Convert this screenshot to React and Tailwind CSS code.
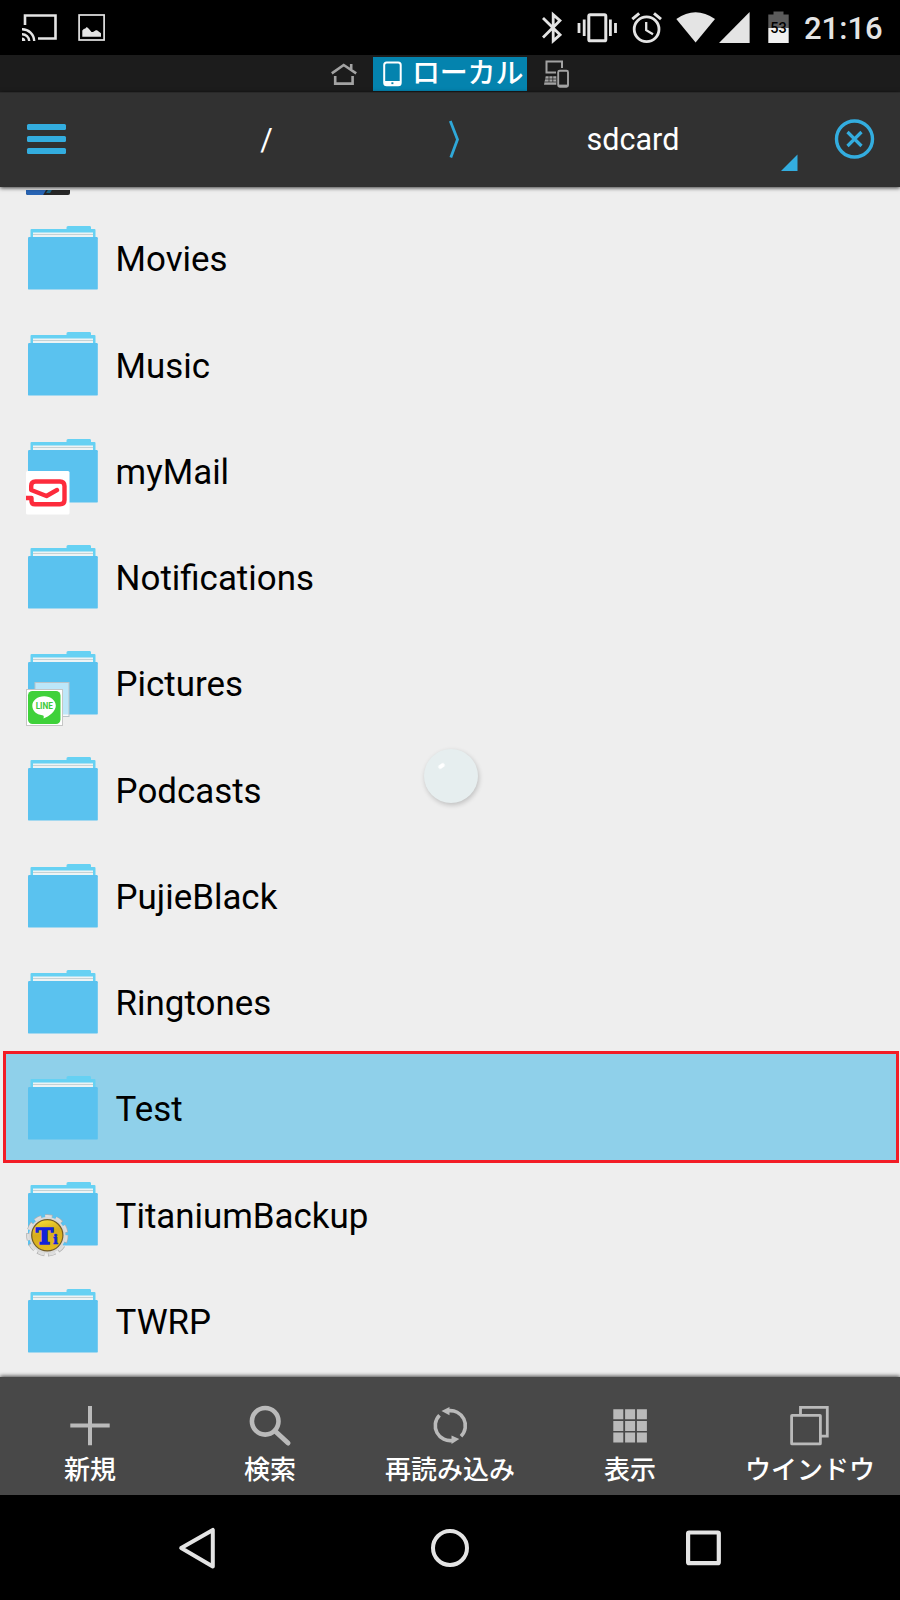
import clsx from "clsx";

const folders = [
  { name: "Movies" },
  { name: "Music" },
  { name: "myMail", badge: "mail" },
  { name: "Notifications" },
  { name: "Pictures", badge: "line" },
  { name: "Podcasts" },
  { name: "PujieBlack" },
  { name: "Ringtones" },
  { name: "Test", selected: true },
  { name: "TitaniumBackup", badge: "titanium" },
  { name: "TWRP" },
];

function StatusBar() {
  return (
    <div className="flex h-[55px] shrink-0 items-center bg-black pl-[22px] pr-[17px] text-[#e4e4e4]">
      {/* Cast */}
      <svg className="h-[55px] w-[36px]" viewBox="22 0 36 55" fill="none" stroke="currentColor">
        <path d="M25 25V15.5H55.5V38.5H38" strokeWidth="2.6" />
        <path d="M22 29.2A12 12 0 0 1 34.2 41M22 34.2A7 7 0 0 1 29.2 41" strokeWidth="2.4" />
        <path d="M22 37.6A3.6 3.6 0 0 1 25.4 41H22Z" fill="currentColor" stroke="none" />
      </svg>
      {/* Picture */}
      <svg className="ml-[20px] h-[55px] w-[28px]" viewBox="78 0 28 55">
        <rect x="79.1" y="15" width="25" height="25" fill="none" stroke="currentColor" strokeWidth="1.7" />
        <path d="M82.3 36.7V30.5L84 28.8H85L86.8 27L88.8 28.8L91.5 32H93L95.8 30.2H97L101 33.2V36.7Z" fill="currentColor" />
      </svg>
      <div className="flex-1" />
      {/* Bluetooth */}
      <svg className="h-[55px] w-[20px]" viewBox="542 0 20 55" fill="none" stroke="currentColor" strokeWidth="2.8">
        <path d="M543 18L560 34.8L553.2 40.8V14.6L560 20.6L543 37.4" />
      </svg>
      {/* Vibrate */}
      <svg className="ml-[15px] h-[55px] w-[40px]" viewBox="577 0 40 55">
        <rect x="588.8" y="14.8" width="17" height="26" rx="1.4" fill="none" stroke="currentColor" strokeWidth="3" />
        <path d="M579 23V33M584.2 19.5V36M610.4 19.5V36M615.5 23V33" stroke="currentColor" strokeWidth="2.8" />
      </svg>
      {/* Alarm */}
      <svg className="ml-[14px] h-[55px] w-[32px]" viewBox="631 0 32 55" fill="none" stroke="currentColor">
        <circle cx="646.6" cy="29.2" r="12.4" strokeWidth="2.8" />
        <path d="M632.3 19.2L639.2 13.4M654 13.4L661 19.2" strokeWidth="3" />
        <path d="M646.2 22V30.2L653 34.2" strokeWidth="2.3" />
      </svg>
      {/* Wifi */}
      <svg className="ml-[13px] h-[55px] w-[39px]" viewBox="676 0 39 55">
        <path d="M676.3 19Q695.5 5.4 715 19L695.6 42.5Z" fill="currentColor" />
      </svg>
      {/* Signal */}
      <svg className="ml-[4px] h-[55px] w-[31px]" viewBox="719 0 31 55">
        <path d="M719 43L749.6 12V43Z" fill="currentColor" />
      </svg>
      {/* Battery */}
      <svg className="ml-[18px] h-[55px] w-[21px]" viewBox="768 0 21 55">
        <path d="M768.3 14.5H773.5V11.5H783.5V14.5H788.7V28H768.3Z" fill="#5b5b5b" />
        <path d="M768.3 28H788.7V43H768.3Z" fill="#f0f0f0" />
        <text x="778.5" y="33.2" textAnchor="middle" fill="#000" className="font-['Roboto'] text-[14.5px] font-medium">53</text>
      </svg>
      <div className="ml-[15px] w-[79px] whitespace-nowrap text-[31px] font-medium leading-[55px]">
        <span className="relative top-[1px]">21:16</span>
      </div>
    </div>
  );
}

function TabBar() {
  return (
    <div className="flex h-[37px] shrink-0 items-center bg-[#1c1c1c] pl-[331px] text-[#a3a3a3]">
      <svg className="h-[37px] w-[26px]" viewBox="331 55 26 37" fill="none" stroke="currentColor">
        <path d="M331.8 73.4L343.7 65L356.2 73.4M351.2 64V69" strokeWidth="2.6" />
        <path d="M335.2 76V83.6H352.6V76" strokeWidth="2.6" />
      </svg>
      <div className="ml-[16px] flex h-[34px] w-[154px] items-center bg-[#0483ae] pl-[10px] text-white">
        <svg className="h-[26px] w-[19px]" viewBox="0 0 19 26">
          <rect x="1.2" y="1.5" width="16.5" height="22.8" rx="2.5" fill="none" stroke="currentColor" strokeWidth="2" />
          <path d="M1.5 20H17.5V24H1.5Z" fill="currentColor" />
          <rect x="8.4" y="21.3" width="2" height="1.8" fill="#0483ae" />
        </svg>
        <span className="ml-[10px] whitespace-nowrap text-[28px] font-medium leading-[34px] tracking-[-0.2px]">ローカル</span>
      </div>
      <svg className="ml-[16px] h-[37px] w-[27px]" viewBox="543 55 27 37" fill="none" stroke="currentColor">
        <path d="M556 72.6H546.5V61.5H562V68" strokeWidth="2" />
        <rect x="558.2" y="70.8" width="9.8" height="16" rx="1.5" strokeWidth="1.9" />
        <path d="M558.5 85.8H568" strokeWidth="2.4" />
        <path d="M545.7 76.3H556.3V84.8H544Z" fill="currentColor" stroke="none" />
        <path d="M545 79H556M544.5 82H556M549 76V82M552.8 76V82" stroke="#1c1c1c" strokeWidth="0.7" />
      </svg>
    </div>
  );
}

function PathBar() {
  return (
    <div className="relative z-10 flex h-[95px] shrink-0 items-center border-t border-[#292929] bg-[#313131] pb-[2px] text-[30.5px] text-white shadow-[0_1px_4px_rgba(0,0,0,0.75)]">
      <div className="flex w-[92px] flex-col gap-[6px] pl-[26.5px]">
        <div className="h-[6px] w-[39.5px] rounded-[1.5px] bg-[#33addf]" />
        <div className="h-[6px] w-[39.5px] rounded-[1.5px] bg-[#33addf]" />
        <div className="h-[6px] w-[39.5px] rounded-[1.5px] bg-[#33addf]" />
      </div>
      <div className="w-[349px] pt-[2px] text-center">/</div>
      <svg className="h-[38px] w-[25px]" viewBox="441 120 25 38" fill="none" stroke="#2fa8d8" strokeWidth="2.8">
        <path d="M450.3 121L457.5 139.6L450.8 157.5" />
      </svg>
      <div className="w-[334px] pt-[2px] text-center">sdcard</div>
      <svg className="-ml-[19px] h-[17px] w-[17px] translate-y-[23px]" viewBox="0 0 17 17">
        <path d="M0 17L16.5 0.5V17Z" fill="#33addf" />
      </svg>
      <svg className="ml-[36px] h-[42px] w-[42px]" viewBox="0 0 42 42" fill="none" stroke="#33addf">
        <circle cx="20.5" cy="21" r="18" strokeWidth="3.4" />
        <path d="M13.5 14L27.5 28M27.5 14L13.5 28" strokeWidth="3.2" />
      </svg>
    </div>
  );
}

function MailBadge() {
  return (
    <svg className="absolute left-[-2px] top-[32px] h-[44px] w-[44px]" viewBox="0 0 44 44">
      <rect width="43.5" height="43.5" rx="1.5" fill="#fff" />
      <path
        d="M0 27H5.500V30Q5.500 33.300 9 33.300H34Q38.500 33.300 38.500 29V15Q38.500 10.500 34 10.500H9.500Q5.200 10.500 5.200 15V19L20.500 25L31 19"
        fill="none"
        stroke="#fd2b3c"
        strokeWidth="4.4"
        strokeLinejoin="round"
        strokeLinecap="round"
      />
    </svg>
  );
}

function LineBadge() {
  return (
    <svg className="absolute left-[-2px] top-[30px] h-[45px] w-[45px]" viewBox="0 0 45 45">
      <rect x="9" y="1.5" width="34" height="34" fill="#fff" fillOpacity="0.6" stroke="#b9c4c9" strokeWidth="1" />
      <rect x="0.5" y="8.5" width="36" height="36" fill="#fff" stroke="#c6c6c6" />
      <rect x="2" y="10" width="32.5" height="33" rx="4.5" fill="#3fd13a" />
      <path d="M18.2 15.2C11.5 15.2 6.3 19.3 6.3 24.8C6.3 30 10.5 33.5 16.2 34.3C18 34.6 18 35.3 17.5 37.5C23 35.5 29.8 30.5 29.8 24.8C29.800 19.300 24.700 15.200 18.200 15.200Z" fill="#fff" />
      <text x="18.3" y="27.8" textAnchor="middle" fill="#3cc93a" className="font-['Roboto'] text-[8.2px] font-bold">LINE</text>
    </svg>
  );
}

function TitaniumBadge() {
  return (
    <svg className="absolute left-[-2px] top-[32px] h-[43px] w-[43px]" viewBox="0 0 43 43">
      <defs>
        <linearGradient id="gold" x1="0" y1="0" x2="0.3" y2="1">
          <stop offset="0" stopColor="#ffe93a" />
          <stop offset="0.5" stopColor="#d6ac1c" />
          <stop offset="1" stopColor="#e3b91f" />
        </linearGradient>
      </defs>
      <circle cx="21.3" cy="21.3" r="18.8" fill="none" stroke="#b0b0b0" strokeWidth="4.6" strokeDasharray="7.2 3.538" />
      <circle cx="21.3" cy="21.3" r="18.4" fill="none" stroke="#dedede" strokeWidth="4" strokeDasharray="6.4 4.11" />
      <circle cx="21.3" cy="21.3" r="18.2" fill="#d8d8d8" />
      <circle cx="21.3" cy="21.3" r="15.6" fill="url(#gold)" stroke="#715b27" strokeWidth="1.2" />
      <text x="10" y="30" fill="#1322d8" stroke="#1322d8" strokeWidth="1.6" className="font-['DejaVu_Serif'] text-[23px] font-bold">T</text>
      <text x="27.2" y="30" fill="#1322d8" stroke="#1322d8" strokeWidth="0.7" className="font-['DejaVu_Serif'] text-[12.5px] font-bold">i</text>
    </svg>
  );
}

const badges = { mail: MailBadge, line: LineBadge, titanium: TitaniumBadge };

function FolderRow({ name, badge, selected }) {
  const Badge = badges[badge];
  return (
    <div className={clsx("relative flex h-[106.25px] items-start pl-[28px] pt-[22px]", selected && "z-10")}>
      {selected && (
        <div className="absolute bottom-[-3px] left-[3px] right-[1px] top-[-3px] border-[3px] border-[#f21c26] bg-[#8fd0ea]" />
      )}
      <div className="relative h-[64px] w-[70px]">
        <svg className="h-[64px] w-[70px]" viewBox="0 0 70 64">
          <path d="M2.5 11V4Q2.5 3 3.5 3H38.5V1.5Q38.500 0 40 0H62Q63 0 63 1.500V3H66.500Q67.500 3 67.500 4V11Z" fill="#66d1f3" />
          <path d="M5 6.5H65V11H5Z" fill="#edf3f4" />
          <path d="M5 8.5H65" stroke="#b9c8cc" strokeWidth="0.8" />
          <rect y="11" width="69.8" height="52.6" rx="1.2" fill="#5ac2ef" />
        </svg>
        {Badge && <Badge />}
      </div>
      <span className="relative ml-[17.6px] mt-[10.4px] whitespace-nowrap text-[34.9px] leading-[48px] text-black">{name}</span>
    </div>
  );
}

function FileList() {
  return (
    <div className="relative h-[1190px] shrink-0 overflow-hidden bg-[#eeeeee]">
      {/* Bottom edge of the row scrolled under the path bar */}
      <div className="flex h-[17px] pl-[26px] pt-[3px]">
        <div className="flex h-[5px] w-[43.5px] overflow-hidden rounded-b-[2px] bg-[#272727]">
          <div className="w-[20px] origin-top -skew-x-[30deg] bg-[#2864b4]" />
          <div className="ml-[1px] h-[3px] w-[4px] -skew-x-[30deg] bg-[#1c6688]" />
        </div>
      </div>
      {folders.map((folder) => (
        <FolderRow key={folder.name} {...folder} />
      ))}
      {/* Floating touch button */}
      <div className="absolute left-[423.5px] top-[562px] h-[54px] w-[54px] rounded-full bg-[#e6eeef] shadow-[1px_2px_5px_rgba(0,0,0,0.2)]">
        <div className="absolute left-[14px] top-[15px] h-[4px] w-[7px] -rotate-[35deg] rounded-full bg-white blur-[0.5px]" />
      </div>
    </div>
  );
}

const tools = [
  {
    label: "新規",
    icon: <path d="M30 10V49.2M10.3 29.6H49.7" stroke="currentColor" strokeWidth="4" />,
  },
  {
    label: "検索",
    icon: (
      <g stroke="currentColor" fill="none">
        <circle cx="25.2" cy="25.3" r="13.3" strokeWidth="4.6" />
        <path d="M35 35L48 47" strokeWidth="5" strokeLinecap="round" />
      </g>
    ),
  },
  {
    label: "再読み込み",
    icon: (
      <g>
        <path d="M19.5 19.2A15 15 0 0 0 33 44.4M28 14.8A15 15 0 0 1 41 40.200" fill="none" stroke="currentColor" strokeWidth="3.6" />
        <path d="M21.500 15L29.500 11V19.200Z" fill="currentColor" />
        <path d="M39.300 43L31.500 39.500V48Z" fill="currentColor" />
      </g>
    ),
  },
  {
    label: "表示",
    icon: (
      <path
        d="M13.3 13.3h10v10h-10ZM25.1 13.3h10v10h-10ZM36.9 13.3h10v10h-10ZM13.3 25h10v10h-10ZM25.1 25h10v10h-10ZM36.9 25h10v10h-10ZM13.3 36.5h10v10h-10ZM25.1 36.5h10v10h-10ZM36.9 36.5h10v10h-10Z"
        fill="currentColor"
      />
    ),
  },
  {
    label: "ウインドウ",
    icon: (
      <g fill="none" stroke="currentColor" strokeWidth="2.8">
        <rect x="11.6" y="19.300" width="28.8" height="28.6" rx="0.5" />
        <path d="M20.5 19V11.3H47.3V40.2H40.5" />
      </g>
    ),
  },
];

function Toolbar() {
  return (
    <div className="relative grid h-[118px] shrink-0 grid-cols-5 bg-[#484848] shadow-[0_-1px_4px_rgba(0,0,0,0.7)]">
      {tools.map((tool) => (
        <div key={tool.label} className="flex flex-col items-center pt-[19px]">
          <svg className="h-[60px] w-[60px] text-[#bababa]" viewBox="0 0 60 60">
            {tool.icon}
          </svg>
          <span className="-mt-[5px] whitespace-nowrap text-[26px] font-medium leading-[38px] text-white">{tool.label}</span>
        </div>
      ))}
    </div>
  );
}

function NavBar() {
  return (
    <div className="flex h-[105px] shrink-0 items-center bg-black pl-[177px] text-[#e4e4e4]">
      <svg className="h-[44px] w-[40px]" viewBox="177 1525.5 40 44" fill="none" stroke="currentColor" strokeWidth="4" strokeLinejoin="round">
        <path d="M181.2 1547.600L212.8 1529.400V1566Z" />
      </svg>
      <svg className="ml-[213px] h-[40px] w-[40px]" viewBox="430 1527.5 40 40" fill="none" stroke="currentColor" strokeWidth="4">
        <circle cx="450" cy="1547.500" r="17" />
      </svg>
      <svg className="ml-[214px] h-[38px] w-[38px]" viewBox="684 1528.5 38 38" fill="none" stroke="currentColor" strokeWidth="4.2">
        <rect x="688.100" y="1532" width="30.700" height="30.700" rx="1" />
      </svg>
    </div>
  );
}

export default function App() {
  return (
    <div className="flex h-[1600px] w-[900px] flex-col overflow-hidden bg-black font-['Roboto','Noto_Sans_CJK_JP',sans-serif]">
      <StatusBar />
      <TabBar />
      <PathBar />
      <FileList />
      <Toolbar />
      <NavBar />
    </div>
  );
}
